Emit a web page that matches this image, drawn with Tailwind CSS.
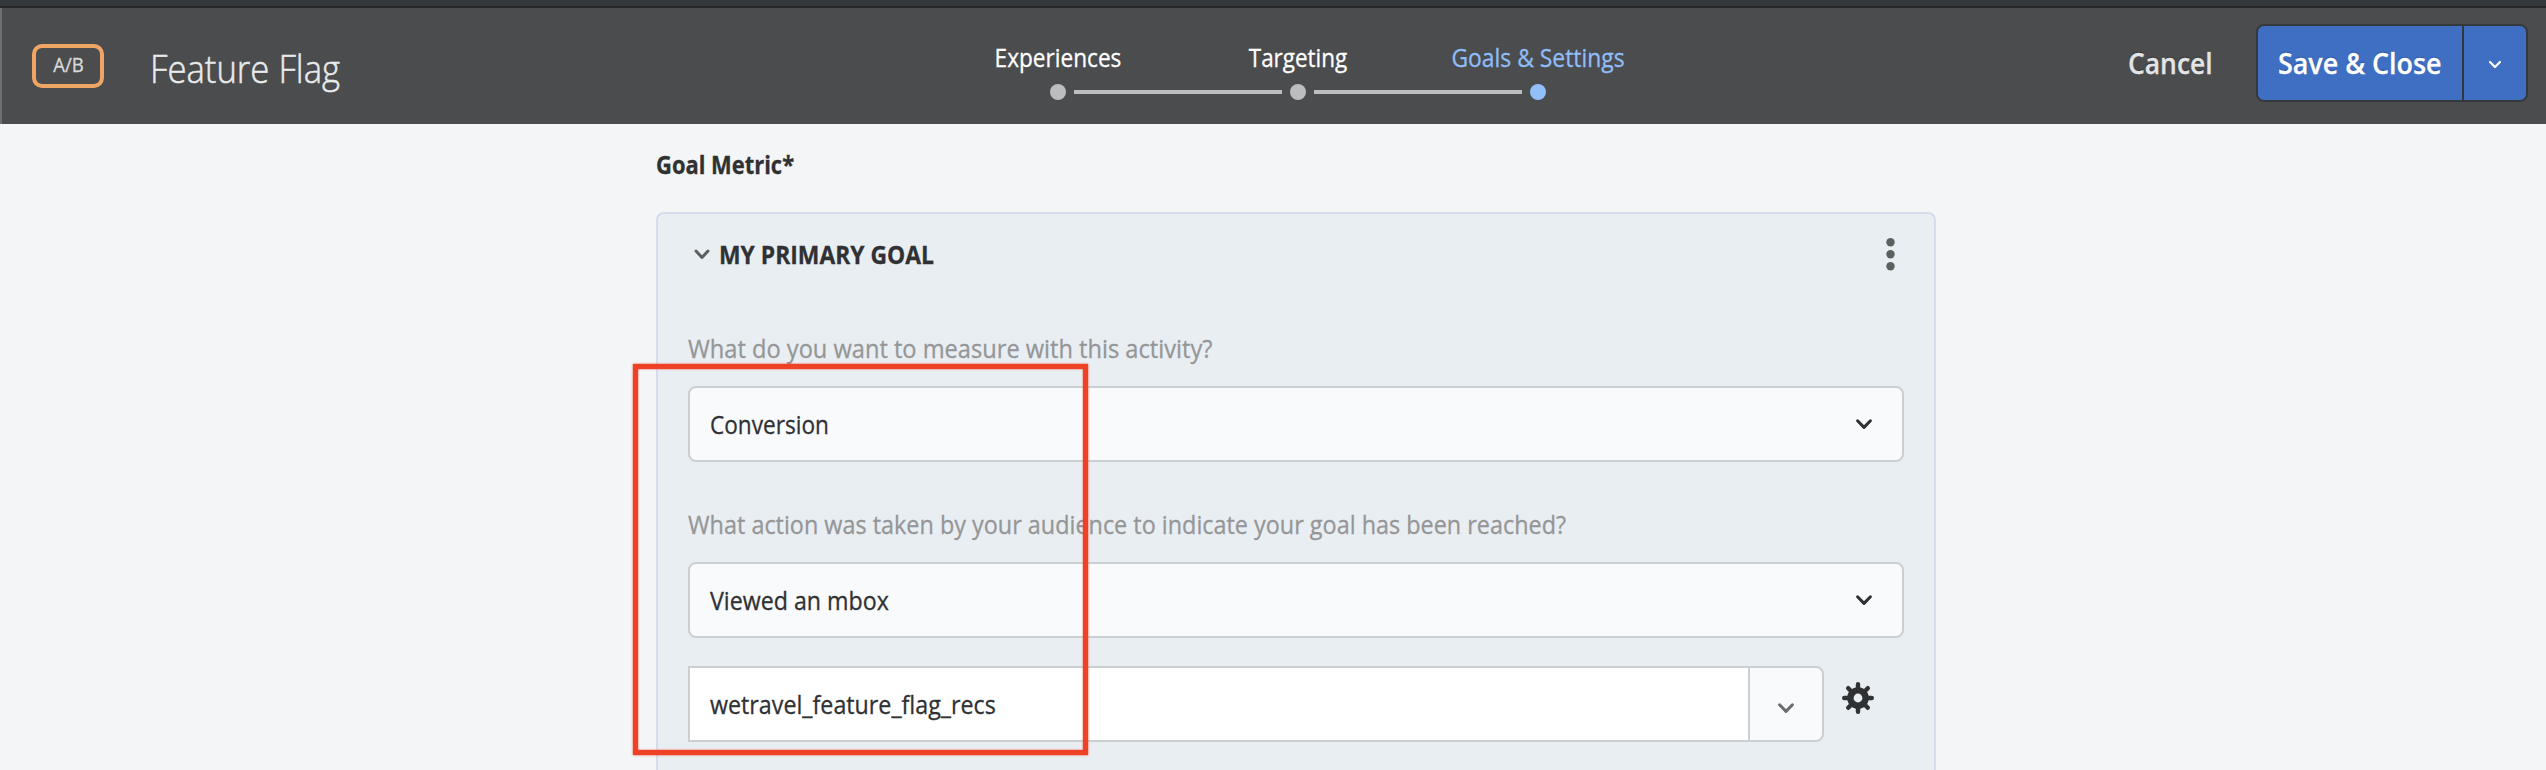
<!DOCTYPE html>
<html lang="en">
<head>
<meta charset="utf-8">
<title>Feature Flag</title>
<script src="https://cdn.jsdelivr.net/npm/@tailwindcss/browser@4"></script>
</head>
<body class="relative h-[770px] overflow-hidden bg-[#f3f5f7] font-['Open_Sans','Noto_Sans',sans-serif] text-[25px] leading-[34px] text-[#2f3133] whitespace-nowrap [-webkit-text-stroke:0.3px]">
<div class="h-2 border-b-2 border-[#242628] bg-[#32383b]"></div>
<header class="grid h-[116px] grid-cols-[996px_1fr_418px] border-l-2 border-[#6e6f70] bg-[#4b4c4d]">
  <div class="flex items-start pl-[30px]">
    <div class="mt-9 flex h-11 w-[72px] justify-center rounded-[10px] border-4 border-[#efa665] text-[20px] leading-[34px] text-[#d9dadb]"><span class="inline-block scale-x-[.93]">A/B</span></div>
    <h1 class="mt-[35px] ml-[46px] origin-left scale-x-[.912] text-[38px] leading-[50px] font-light text-[#e9eaeb] [-webkit-text-stroke:0.5px]">Feature Flag</h1>
  </div>
  <nav class="flex w-[720px] flex-col pt-[32px] text-white">
    <div class="grid grid-cols-[240px_240px_240px] -ml-[60px] text-center">
      <span class="scale-x-[.905]">Experiences</span>
      <span class="scale-x-[.898]">Targeting</span>
      <span class="scale-x-[.915] text-[#8fbdf8]">Goals &amp; Settings</span>
    </div>
    <div class="mt-[10px] ml-[52px] flex items-center gap-2">
      <i class="size-4 rounded-full bg-[#bcbdbf]"></i><i class="h-1 w-[208px] bg-[#bcbdbf]"></i>
      <i class="size-4 rounded-full bg-[#bcbdbf]"></i><i class="h-1 w-[208px] bg-[#bcbdbf]"></i>
      <i class="size-4 rounded-full bg-[#91bffa]"></i>
    </div>
  </nav>
  <div class="flex items-start pt-4 text-[28px] font-semibold text-[#e3e4e6]">
    <div class="w-[128px] pt-[22px]"><span class="inline-block origin-left scale-x-[.945] [text-shadow:0_-1px_1px_#2c2d2e]">Cancel</span></div>
    <div class="flex h-[78px] w-[272px] rounded-lg border-2 border-[#35393e] bg-[#3f6fc3] text-white">
      <div class="w-[206px] border-r-2 border-[#32373f] pt-5 pl-5"><span class="inline-block origin-left scale-x-[.96] [text-shadow:0_-1px_1px_#2450a0]">Save &amp; Close</span></div>
      <div class="flex flex-1 items-center justify-center"><svg class="mt-1" width="14" height="10" viewBox="0 0 14 10" fill="none" stroke="currentColor" stroke-width="2.2" stroke-linecap="round" stroke-linejoin="round"><path d="M2 2l5 5 5-5"/></svg></div>
    </div>
  </div>
</header>
<main class="ml-[656px] w-[1280px]">
  <h2 class="pt-[23px] font-bold"><span class="inline-block origin-left scale-x-[.877]">Goal Metric*</span></h2>
  <section class="mt-[31px] h-[558px] rounded-t-lg border-2 border-b-0 border-[#d3ddec] bg-[#e9eef3] px-[30px]">
    <div class="flex h-[126px] items-start justify-between pt-6">
      <div class="flex items-center pl-[6px]">
        <svg width="16" height="11" viewBox="0 0 16 11" fill="none" stroke="#5c6061" stroke-width="3" stroke-linecap="round" stroke-linejoin="round"><path d="M2 2l6 6.5L14 2"/></svg>
        <h3 class="-mt-px ml-[9px] origin-left scale-x-[.915] font-bold">MY PRIMARY GOAL</h3>
      </div>
      <svg class="mr-[9px]" width="9" height="33" viewBox="0 0 9 33" fill="#5b6061"><circle cx="4.5" cy="4.2" r="4.2"/><circle cx="4.5" cy="16.2" r="4.2"/><circle cx="4.5" cy="28.2" r="4.2"/></svg>
    </div>
    <div class="-mt-[9px] h-[55px] text-[#959697]"><span class="inline-block origin-left scale-x-[.945]">What do you want to measure with this activity?</span></div>
    <div class="flex h-[76px] items-center justify-between rounded-lg border-2 border-[#cccfd1] bg-[#f9fafc] pr-[30px] pl-5">
      <span class="origin-left scale-x-[.905]">Conversion</span>
      <svg width="16" height="11" viewBox="0 0 16 11" fill="none" stroke="#2f3133" stroke-width="3" stroke-linecap="round" stroke-linejoin="round"><path d="M1.6 1.8L8 8.4l6.4-6.6"/></svg>
    </div>
    <div class="mt-[45px] h-[55px] text-[#959697]"><span class="inline-block origin-left scale-x-[.936]">What action was taken by your audience to indicate your goal has been reached?</span></div>
    <div class="flex h-[76px] items-center justify-between rounded-lg border-2 border-[#cccfd1] bg-[#f9fafc] pr-[30px] pl-5">
      <span class="origin-left scale-x-[.928]">Viewed an mbox</span>
      <svg width="16" height="11" viewBox="0 0 16 11" fill="none" stroke="#2f3133" stroke-width="3" stroke-linecap="round" stroke-linejoin="round"><path d="M1.6 1.8L8 8.4l6.4-6.6"/></svg>
    </div>
    <div class="mt-7 flex items-start">
      <div class="flex h-[76px] w-[1136px] overflow-hidden rounded-r-lg border-2 border-[#cccfd1] bg-[#f9fafc]">
        <div class="flex w-[1060px] items-center border-r-2 border-[#cccfd1] bg-white pl-5"><span class="origin-left scale-x-[.93]">wetravel_feature_flag_recs</span></div>
        <div class="flex flex-1 items-center justify-center"><svg class="mt-[9px]" width="16" height="11" viewBox="0 0 16 11" fill="none" stroke="#6b6d6e" stroke-width="3" stroke-linecap="round" stroke-linejoin="round"><path d="M1.6 1.8L8 8.4l6.4-6.6"/></svg></div>
      </div>
      <svg class="mt-4 ml-[18px]" width="32" height="32" viewBox="-16 -16 32 32" fill="none" stroke="#2f3133"><circle r="7.6" stroke-width="6.4"/><path stroke-width="4.4" stroke-linecap="round" d="M0-13.8V-9M0 13.8V9M-13.8 0H-9M13.8 0H9M-9.8-9.8l3 3M9.8-9.8l-3 3M-9.8 9.8l3-3M9.8 9.8l-3-3"/></svg>
    </div>
  </section>
</main>
<!-- Highlight drawn over the form -->
<div class="absolute top-[364px] left-[633px] h-[391px] w-[455px] border-[5px] border-[#ee4126] shadow-[0_0_2px_#ee4126,inset_0_0_2px_#ee4126]"></div>
</body>
</html>
